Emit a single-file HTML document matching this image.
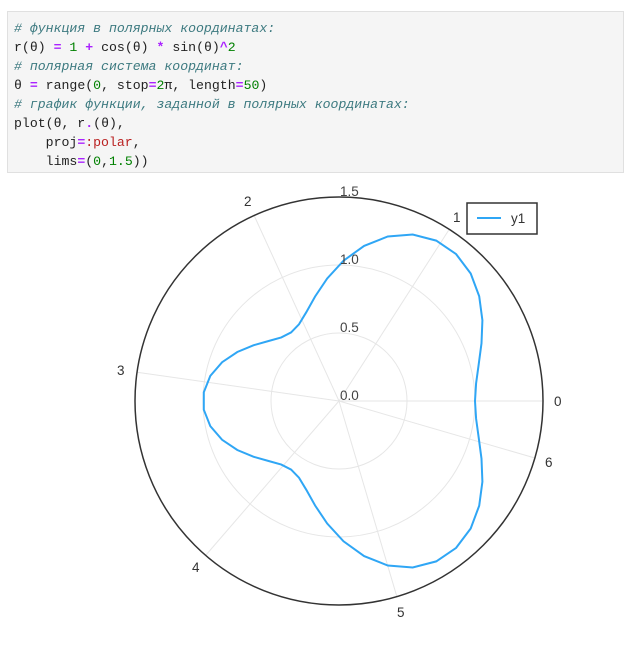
<!DOCTYPE html>
<html><head><meta charset="utf-8"><style>
body{margin:0;background:#fff;width:624px;height:649px;overflow:hidden;position:relative;font-family:"Liberation Sans",sans-serif}
.code{position:absolute;left:7px;top:11px;width:617px;height:162px;background:#f5f5f5;border:1px solid #e0e0e0;box-sizing:border-box}
pre{margin:0;position:absolute;left:6px;top:7px;font-family:"Liberation Mono","DejaVu Sans Mono",monospace;font-size:13.2px;line-height:19px;color:#222}
.c{color:#3d7a80;font-style:italic}.o{color:#aa22ff;font-weight:bold}.n{color:#008000}.s{color:#ba2121}
</style></head><body>
<div class="code"><pre><span class="c"># функция в полярных координатах:</span>
r(θ) <span class="o">=</span> <span class="n">1</span> <span class="o">+</span> cos(θ) <span class="o">*</span> sin(θ)<span class="o">^</span><span class="n">2</span>
<span class="c"># полярная система координат:</span>
θ <span class="o">=</span> range(<span class="n">0</span>, stop<span class="o">=</span><span class="n">2</span>π, length<span class="o">=</span><span class="n">50</span>)
<span class="c"># график функции, заданной в полярных координатах:</span>
plot(θ, r<span class="o">.</span>(θ),
    proj<span class="o">=</span><span class="s">:polar</span>,
    lims<span class="o">=</span>(<span class="n">0</span>,<span class="n">1.5</span>))</pre></div>
<svg id="p" width="624" height="649" style="position:absolute;left:0;top:0" font-family="Liberation Sans, sans-serif" font-size="13.5" fill="#333">
<g id="grid" stroke="#e6e6e6" stroke-width="1" fill="none">
<circle cx="339" cy="401" r="68"/><circle cx="339" cy="401" r="136"/>
</g>
<circle cx="339" cy="401" r="204" stroke="#333" stroke-width="1.5" fill="none"/>
<polyline id="curve" fill="none" stroke="#2fa6f5" stroke-width="2"/>
<text x="340" y="332" fill="#444">0.5</text>
<text x="340" y="400" fill="#444">0.0</text>
<text x="340" y="264" fill="#444">1.0</text>
<text x="340" y="196" fill="#444">1.5</text>
<text x="554" y="406">0</text>
<text x="453" y="222">1</text>
<text x="244" y="206">2</text>
<text x="117" y="375">3</text>
<text x="192" y="572">4</text>
<text x="397" y="617">5</text>
<text x="545" y="467">6</text>
<rect x="467" y="203" width="70" height="31" fill="#fff" stroke="#333" stroke-width="1.5"/>
<line x1="477" y1="218" x2="501" y2="218" stroke="#2fa6f5" stroke-width="2"/>
<text x="511" y="223">y1</text>
</svg>
<script>
var cx=339,cy=401,s=136,g=document.getElementById('grid'),ns='http://www.w3.org/2000/svg';
for(var k=0;k<7;k++){var l=document.createElementNS(ns,'line');l.setAttribute('x1',cx);l.setAttribute('y1',cy);l.setAttribute('x2',cx+204*Math.cos(k));l.setAttribute('y2',cy-204*Math.sin(k));g.appendChild(l);}
var pts=[];for(var i=0;i<50;i++){var t=2*Math.PI*i/49,r=1+Math.cos(t)*Math.sin(t)*Math.sin(t);pts.push((cx+s*r*Math.cos(t)).toFixed(1)+','+(cy-s*r*Math.sin(t)).toFixed(1));}
document.getElementById('curve').setAttribute('points',pts.join(' '));
</script>
</body></html>
